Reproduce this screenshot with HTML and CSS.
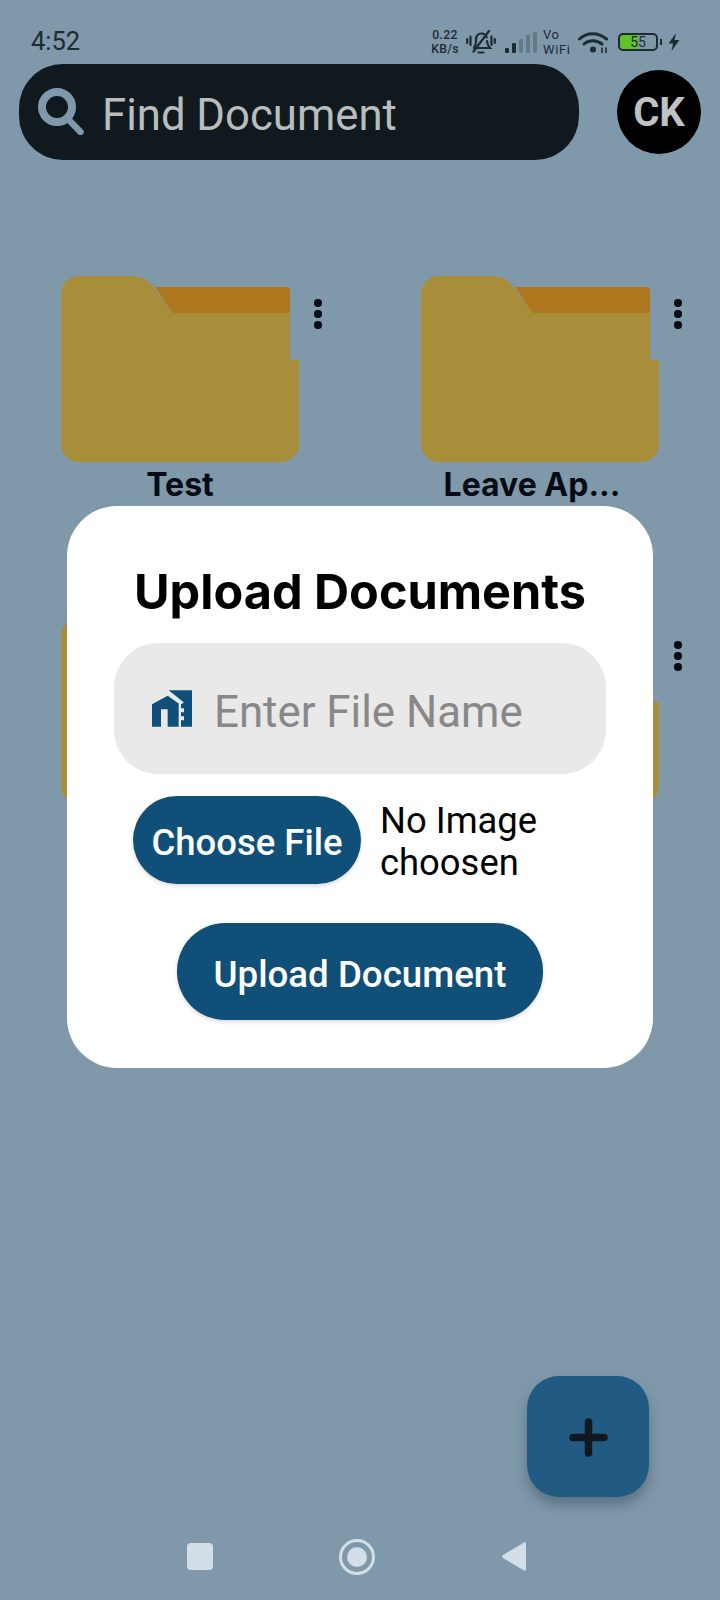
FILE: index.html
```html
<!DOCTYPE html>
<html>
  <head>
    <meta charset="utf-8" />
    <title>Documents</title>
    <meta name="viewport" content="width=device-width, initial-scale=1" />
    <link rel="stylesheet" href="styles.css">
  </head>
  <body>
    <div class="page">
      <div class="status-bar">
        <span class="time">4:52</span>
        <div class="status-icons">
          <span class="speed">0.22<br />KB/s</span>
          <svg class="bell" viewBox="0 0 30 24" fill="none" stroke="#1d2b33" stroke-width="2.2" stroke-linecap="round">
            <path d="M8 18 C10.5 15 10 12 10 9.5 C10 5.5 12.5 3.5 15.5 3.5 C18 3.5 20 5 20.7 7.5 M21 11 C21.2 14 22 16 24 18 L8 18" />
            <path d="M12.5 22.5 L17.5 22.5" />
            <path d="M7.5 21.5 L23 1" />
            <path d="M1.2 9 L1.2 13 M4.5 6.5 L4.5 15 M25.5 6.5 L25.5 15 M28.8 9 L28.8 13" />
          </svg>
          <div class="signal">
            <span class="bar bar-1"></span>
            <span class="bar bar-2"></span>
            <span class="bar bar-3 dim"></span>
            <span class="bar bar-4 dim"></span>
            <span class="bar bar-5 dim"></span>
          </div>
          <span class="vowifi">Vo<br />WiFi</span>
          <svg class="wifi" viewBox="0 0 30 21" fill="none" stroke="#1d2b33" stroke-width="3" stroke-linecap="round">
            <path d="M1.5 7 C9 0 20 0 28.5 7" />
            <path d="M6 12 C11 7.5 18.5 7.5 24 12" />
            <circle cx="15" cy="17.5" r="3" fill="#1d2b33" stroke="none" />
            <path d="M24 16 L24 20.5 M28 16 L28 20.5" stroke-width="1.6" />
          </svg>
          <div class="battery-wrap">
            <div class="battery">55</div>
            <span class="battery-nub"></span>
          </div>
          <svg class="bolt" viewBox="0 0 12 18"><path d="M8 0 L0.5 10.5 L5 10.5 L3.5 18 L11.5 7 L6.5 7 Z" fill="#1d2b33" /></svg>
        </div>
      </div>

      <header class="top-row">
        <div class="search">
          <svg class="search-icon" viewBox="0 0 46 47" fill="none" stroke="#7f98aa">
            <circle cx="19" cy="19" r="15" stroke-width="8" />
            <path d="M30 31 L42.5 44" stroke-width="6.5" stroke-linecap="round" />
          </svg>
          <span class="search-text">Find Document</span>
        </div>
        <div class="avatar">CK</div>
      </header>

      <main class="folders">
        <section class="folder">
          <div class="folder-top">
            <svg class="folder-icon" viewBox="0 0 238 186"><use href="#folder-shape" /></svg>
            <div class="dots"><span></span><span></span><span></span></div>
          </div>
          <p class="folder-name">Test</p>
        </section>
        <section class="folder">
          <div class="folder-top">
            <svg class="folder-icon" viewBox="0 0 238 186"><use href="#folder-shape" /></svg>
            <div class="dots"><span></span><span></span><span></span></div>
          </div>
          <p class="folder-name folder-name-long">Leave Ap...</p>
        </section>
        <section class="folder">
          <div class="folder-top">
            <svg class="folder-icon" viewBox="0 0 238 186"><use href="#folder-shape" /></svg>
            <div class="dots"><span></span><span></span><span></span></div>
          </div>
        </section>
        <section class="folder">
          <div class="folder-top">
            <svg class="folder-icon" viewBox="0 0 238 186"><use href="#folder-shape" /></svg>
            <div class="dots"><span></span><span></span><span></span></div>
          </div>
        </section>
      </main>

      <nav class="nav-bar">
        <span class="nav-square"></span>
        <span class="nav-circle"><span></span></span>
        <svg class="nav-back" viewBox="0 0 25 31"><path d="M23 1.5 L2 14 Q0 15.5 2 17 L23 29.5 Q25 30.5 25 28 L25 3 Q25 0.5 23 1.5 Z" fill="#d3dee6" /></svg>
      </nav>

      <button class="fab">
        <svg viewBox="0 0 39 39"><path d="M19.5 4 L19.5 35 M4 19.5 L35 19.5" stroke="#11191e" stroke-width="7.5" stroke-linecap="round" /></svg>
      </button>

      <div class="modal">
        <h1 class="modal-title">Upload Documents</h1>
        <div class="file-input">
          <svg class="file-icon" viewBox="38 38 120 110">
            <path d="M38 80 L85 55 L118 78 L118 148 L85 148 L85 95 L65 95 L65 148 L38 148 Z" fill="#0f4f78" />
            <path d="M88 38 L158 38 L158 148 L125 148 L125 128 L134 128 L134 116 L125 116 L125 104 L134 104 L134 92 L125 92 L125 80 L134 75 Z" fill="#0f4f78" />
          </svg>
          <span class="file-placeholder">Enter File Name</span>
        </div>
        <div class="choose-row">
          <button class="btn btn-choose">Choose File</button>
          <span class="choose-status">No Image choosen</span>
        </div>
        <button class="btn btn-upload">Upload Document</button>
      </div>
    </div>

    <svg class="defs" width="0" height="0">
      <defs>
        <g id="folder-shape">
          <path d="M18 0 L70 0 Q84 0 91 9 L110 35 Q111 37 114 37 L229 37 L229 84 L238 84 L238 168 A18 18 0 0 1 220 186 L18 186 A18 18 0 0 1 0 168 L0 18 A18 18 0 0 1 18 0 Z" fill="#a88e3a" />
          <path d="M94 11 L225 11 Q229 11 229 15 L229 37 L114 37 Q111 37 110 35 Z" fill="#ae771e" />
        </g>
      </defs>
    </svg>
  </body>
</html>
```

FILE: styles.css
```css
* {
  box-sizing: border-box;
}
body {
  margin: 0;
  background-color: #7f98aa;
  font-family: "Roboto", sans-serif;
}
.page {
  position: relative;
  width: 720px;
  height: 1600px;
  display: flex;
  flex-direction: column;
  overflow: hidden;
}
.defs {
  position: absolute;
}

/* status bar */
.status-bar {
  height: 64px;
  padding: 26px 40px 0 31px;
  display: flex;
  justify-content: space-between;
  align-items: flex-start;
  color: #1d2b33;
}
.time {
  font-size: 25.5px;
  line-height: 30px;
}
.status-icons {
  display: flex;
  align-items: center;
  height: 28px;
  margin-top: 2px;
}
.speed {
  font-size: 12.2px;
  font-weight: 500;
  line-height: 14.4px;
  letter-spacing: 0.3px;
  text-align: center;
  width: 28px;
}
.bell {
  width: 30px;
  height: 24px;
  margin-left: 7px;
}
.signal {
  width: 32px;
  height: 21px;
  margin-left: 9px;
  display: flex;
  align-items: flex-end;
  gap: 2.5px;
}
.bar {
  width: 4.4px;
  background: #1d2b33;
  border-radius: 1px;
}
.bar.dim {
  background: #637a8b;
}
.bar-1 { height: 5px; }
.bar-2 { height: 10px; }
.bar-3 { height: 14px; }
.bar-4 { height: 18px; }
.bar-5 { height: 21px; }
.vowifi {
  font-size: 13px;
  line-height: 15.4px;
  letter-spacing: 0.6px;
  width: 30px;
  margin-left: 6px;
}
.wifi {
  width: 30px;
  height: 21px;
  margin-left: 5px;
}
.battery-wrap {
  display: flex;
  align-items: center;
  margin-left: 10px;
}
.battery {
  width: 40px;
  height: 18px;
  border: 2px solid #1d2b33;
  border-radius: 5px;
  background: linear-gradient(90deg, #5ec326 50%, transparent 50%);
  background-clip: padding-box;
  font-size: 14px;
  line-height: 14px;
  text-align: center;
}
.battery-nub {
  width: 2px;
  height: 6px;
  margin-left: 2px;
  background: #1d2b33;
}
.bolt {
  width: 12px;
  height: 18px;
  margin-left: 6px;
}

/* search row */
.top-row {
  padding: 0 19px;
  display: flex;
  justify-content: space-between;
  align-items: center;
}
.search {
  width: 560px;
  height: 96px;
  padding-left: 19px;
  background: #101a1e;
  border-radius: 44px;
  display: flex;
  align-items: center;
  gap: 18px;
}
.search-icon {
  width: 46px;
  height: 47px;
  margin-top: -2px;
}
.search-text {
  font-size: 43.7px;
  margin-top: 6px;
  color: #b9bdbd;
}
.avatar {
  width: 84px;
  height: 84px;
  border-radius: 50%;
  background: #000;
  color: #bfc2c2;
  font-weight: 700;
  font-size: 40px;
  display: flex;
  align-items: center;
  justify-content: center;
}

/* folders */
.folders {
  margin-top: 116px;
  display: grid;
  grid-template-columns: 360px 360px;
  grid-auto-rows: 342px;
}
.folder {
  padding-left: 61px;
}
.folder-top {
  display: flex;
  align-items: flex-start;
  gap: 15px;
}
.folder-icon {
  width: 238px;
  height: 186px;
  display: block;
}
.dots {
  margin-top: 23px;
  display: flex;
  flex-direction: column;
  gap: 3.5px;
}
.dots span {
  width: 7.5px;
  height: 7.5px;
  border-radius: 50%;
  background: #050b14;
}
.folder-name {
  width: 238px;
  margin: 4px 0 0;
  font-family: "Inter", sans-serif;
  font-weight: 700;
  font-size: 32px;
  line-height: 38px;
  text-align: center;
  color: #050b14;
}
.folder-name-long {
  padding-right: 16px;
  white-space: nowrap;
}

/* bottom nav */
.nav-bar {
  margin-top: auto;
  height: 31px;
  margin-bottom: 28px;
  padding-left: 187px;
  display: flex;
  align-items: center;
  gap: 126px;
}
.nav-square {
  width: 26px;
  height: 27px;
  background: #d3dee6;
  border-radius: 4px;
}
.nav-circle {
  width: 36px;
  height: 36px;
  border: 3px solid #d3dee6;
  border-radius: 50%;
  display: flex;
  align-items: center;
  justify-content: center;
}
.nav-circle span {
  width: 20px;
  height: 20px;
  border-radius: 50%;
  background: #d3dee6;
}
.nav-back {
  width: 25px;
  height: 31px;
}

/* add button */
.fab {
  position: absolute;
  top: 1376px;
  left: 527px;
  width: 122px;
  height: 121px;
  padding: 0;
  border: none;
  border-radius: 32px;
  background: #215a82;
  box-shadow: 0 8px 12px rgba(30, 50, 65, 0.35);
  display: flex;
  align-items: center;
  justify-content: center;
}
.fab svg {
  width: 39px;
  height: 39px;
  margin-top: 1px;
}

/* upload dialog */
.modal {
  position: absolute;
  top: 506px;
  left: 67px;
  width: 586px;
  height: 562px;
  padding: 54px 47px 48px;
  background: #fff;
  border-radius: 50px;
  display: flex;
  flex-direction: column;
}
.modal-title {
  margin: 2px 0 -2px;
  font-family: "Inter", sans-serif;
  font-weight: 700;
  font-size: 48.6px;
  line-height: 60px;
  text-align: center;
  color: #000;
}
.file-input {
  margin-top: 23px;
  height: 132px;
  padding-left: 38px;
  background: #e9e9e9;
  border-radius: 44px;
  display: flex;
  align-items: center;
  gap: 22px;
}
.file-icon {
  width: 40px;
  height: 37px;
}
.file-placeholder {
  font-size: 43.8px;
  margin-top: 6px;
  color: #888;
}
.btn {
  border: none;
  background: #0f4f78;
  color: #fff;
  font-family: "Roboto", sans-serif;
  font-weight: 500;
  box-shadow: 0 2px 4px rgba(0, 0, 0, 0.15);
}
.choose-row {
  margin-top: 21px;
  padding-left: 19px;
  display: flex;
  align-items: center;
  gap: 19px;
}
.btn-choose {
  width: 228px;
  height: 88px;
  padding: 6px 0 0;
  border-radius: 44px;
  font-size: 36.5px;
  flex: none;
}
.choose-status {
  font-size: 36.4px;
  line-height: 42px;
  margin-top: 5px;
  color: #000;
  width: 200px;
}
.btn-upload {
  align-self: center;
  margin-top: 39px;
  width: 366px;
  height: 97px;
  padding: 5px 0 0;
  border-radius: 48px;
  font-size: 36.7px;
}
```
